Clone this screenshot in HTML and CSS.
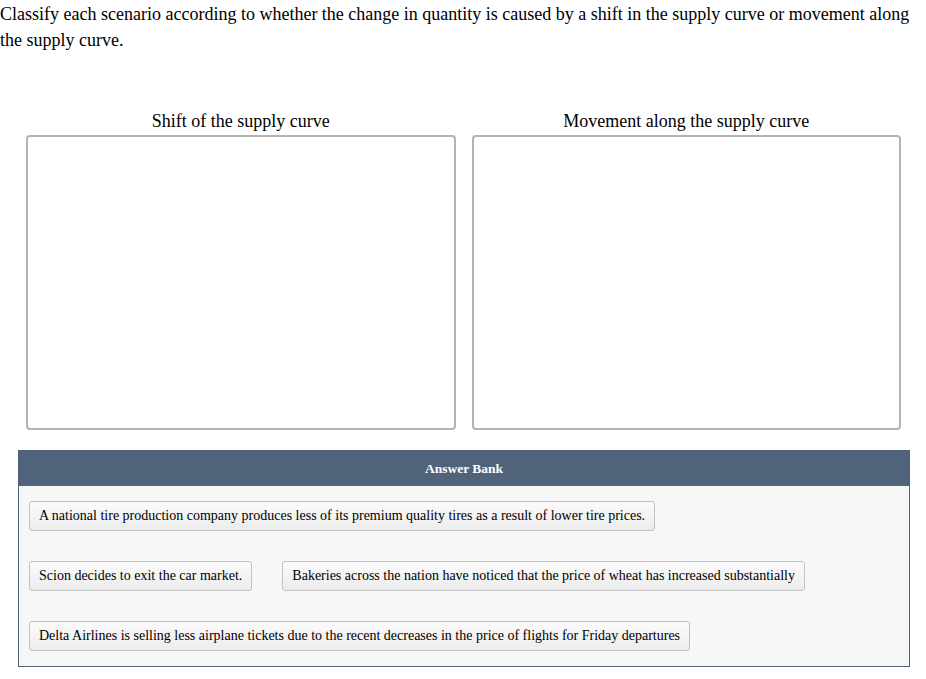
FILE: index.html
```html
<!DOCTYPE html>
<html lang="en">
  <head>
    <meta charset="UTF-8" />
    <meta name="viewport" content="width=device-width, initial-scale=1.0" />
    <title>Classify supply scenarios</title>
    <link rel="stylesheet" href="styles.css">
  </head>
  <body>
    <p class="question">
      Classify each scenario according to whether the change in quantity is caused by a shift in the supply curve or movement along the supply curve.
    </p>

    <div class="bins">
      <div class="bin">
        <h3 class="bin-title">Shift of the supply curve</h3>
        <div class="drop-zone"></div>
      </div>
      <div class="bin">
        <h3 class="bin-title">Movement along the supply curve</h3>
        <div class="drop-zone"></div>
      </div>
    </div>

    <section class="answer-bank">
      <div class="bank-header">Answer Bank</div>
      <div class="bank-body">
        <div class="bank-row">
          <span class="chip">A national tire production company produces less of its premium quality tires as a result of lower tire prices.</span>
        </div>
        <div class="bank-row">
          <span class="chip">Scion decides to exit the car market.</span>
          <span class="chip">Bakeries across the nation have noticed that the price of wheat has increased substantially</span>
        </div>
        <div class="bank-row">
          <span class="chip">Delta Airlines is selling less airplane tickets due to the recent decreases in the price of flights for Friday departures</span>
        </div>
      </div>
    </section>
  </body>
</html>
```

FILE: styles.css
```css
:root {
  --pizarra: #50637a;
  --borde-caja: #b3b3b3;
  --fondo-banco: #f7f7f7;
}

* {
  box-sizing: border-box;
  margin: 0;
  padding: 0;
}

body {
  font-family: "Liberation Serif", "Times New Roman", serif;
  color: #000;
  background: white;
}

.question {
  font-size: 18px;
  line-height: 26px;
  padding-top: 1px;
}

.bins {
  display: flex;
  gap: 16px;
  width: 891px;
  margin: 56px 0 0 18px;
  padding: 0 8px;
}

.bin {
  flex: 1;
}

.bin-title {
  font-weight: normal;
  font-size: 18px;
  line-height: 22px;
  text-align: center;
  margin-top: 1px;
  margin-bottom: 3px;
}

.drop-zone {
  height: 295px;
  border: 2px solid var(--borde-caja);
  border-radius: 4px;
  background: white;
}

.answer-bank {
  width: 892px;
  margin: 20px 0 0 18px;
  border: 1px solid var(--pizarra);
}

.bank-header {
  background: var(--pizarra);
  color: white;
  font-weight: bold;
  font-size: 13.5px;
  text-align: center;
  height: 35px;
  line-height: 35px;
}

.bank-body {
  background: var(--fondo-banco);
  padding: 15px 10px;
  display: flex;
  flex-direction: column;
  gap: 30px;
}

.bank-row {
  display: flex;
  gap: 30px;
}

.chip {
  display: inline-block;
  height: 30px;
  line-height: 28px;
  padding: 0 9px;
  font-size: 14px;
  border: 1px solid #c2c2c2;
  border-radius: 3px;
  background: linear-gradient(to bottom, #fbfbfb, #ececec);
  white-space: nowrap;
}
```
